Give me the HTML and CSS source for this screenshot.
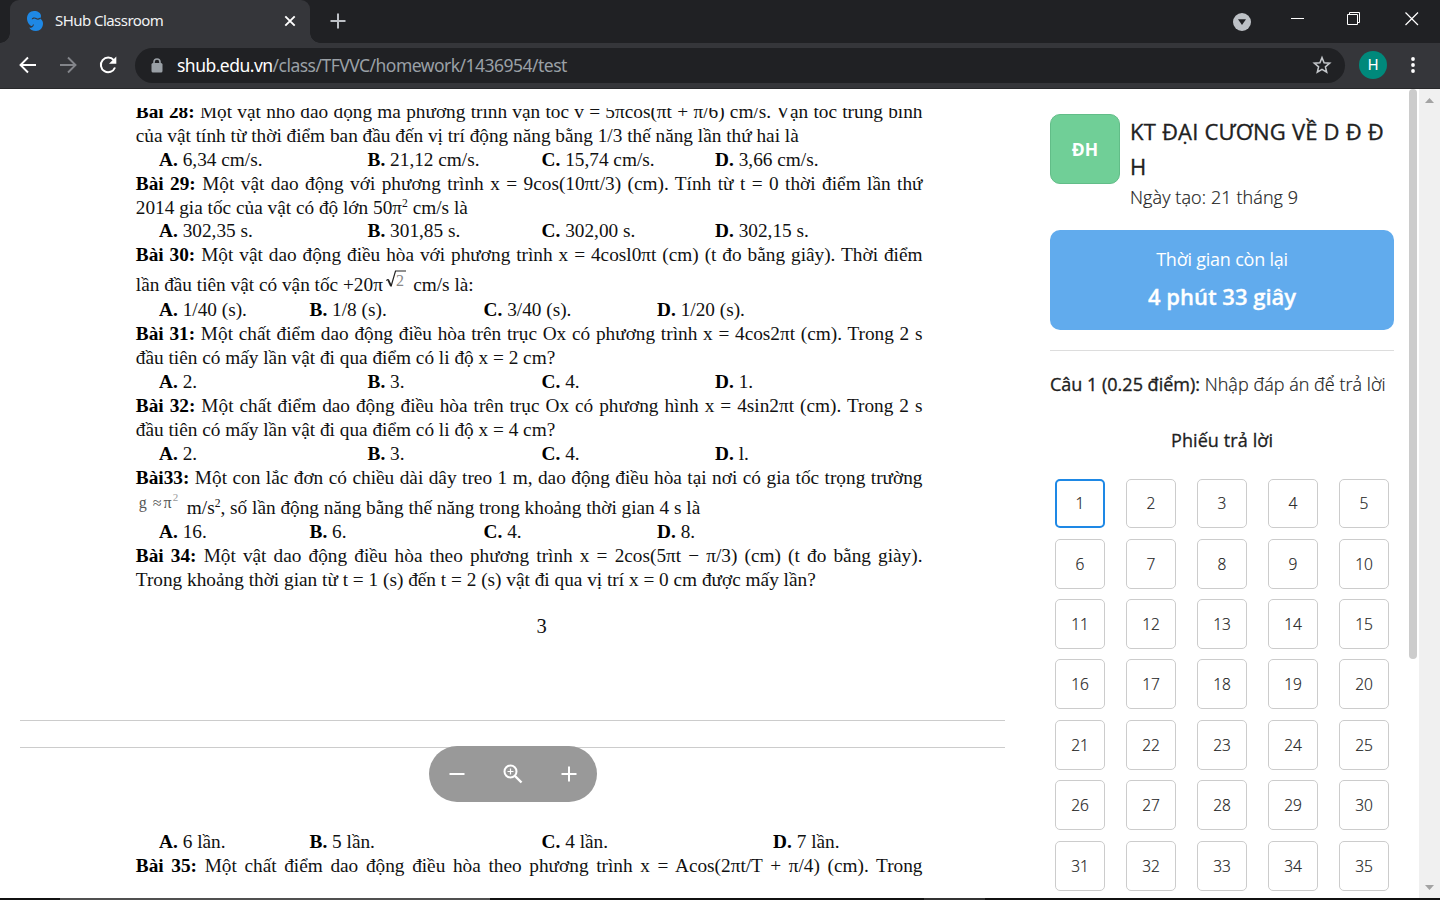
FILE: index.html
```html
<!DOCTYPE html>
<html lang="vi">
<head>
<meta charset="utf-8">
<title>SHub Classroom</title>
<link rel="stylesheet" href="styles.css">
</head>
<body>
<header class="tabs">
  <div class="tab">
    <svg class="logo" width="18" height="22" viewBox="0 0 18 22"><path fill="#1e88e5" d="M8 1c4 0 7 2 7 5 0 1.300-.5 2-1 2.500C16 9.500 17 11.500 17 13.500 17 18 14 21 10 21c-3.500 0-6-1.500-7-4 1.500.7 3 .5 4-.2C3 15.500 1 12 1 8.500 1 4 4 1 8 1z"/><path d="M14 8.300c-1.500 1.200-3 .8-4 .2-1.600-1-3.800-.2-3.800.8M2.500 16.800c2 .8 4.500 0 5-2.300" fill="none" stroke="#35363a" stroke-width="1.100"/></svg>
    <span class="tab-title">SHub Classroom</span>
    <svg class="tab-close" width="12" height="12" viewBox="0 0 12 12"><path d="M1.300 1.300l9.400 9.400M10.700 1.300l-9.400 9.400" stroke="#fff" stroke-width="1.900"/></svg>
  </div>
  <svg class="new-tab" width="16" height="16" viewBox="0 0 16 16"><path d="M8 .5v15M.5 8h15" stroke="#bdc1c6" stroke-width="2"/></svg>
  <div class="window-controls">
    <svg width="18" height="18" viewBox="0 0 18 18"><circle cx="9" cy="9" r="9" fill="#bdc1c6"/><path d="M5 6.300h8L9 12z" fill="#202124"/></svg>
    <svg width="14" height="14" viewBox="0 0 14 14"><path d="M0 6.500h13" stroke="#fff"/></svg>
    <svg width="14" height="14" viewBox="0 0 14 14"><path d="M.5 2.500h10v10H.5zM2.500 2.500v-2h10v10h-2" fill="none" stroke="#fff"/></svg>
    <svg width="14" height="14" viewBox="0 0 14 14"><path d="M.5.5l12.500 12.500M13 .5L.5 13" stroke="#fff" stroke-width="1.200"/></svg>
  </div>
</header>
<nav class="toolbar">
  <svg class="nav-icon" width="18" height="18" viewBox="0 0 18 18"><path d="M17 9H2M9 1.500L1.500 9 9 16.500" fill="none" stroke="#fff" stroke-width="1.900"/></svg>
  <svg class="nav-icon" width="18" height="18" viewBox="0 0 18 18"><path d="M1 9h15M9 1.500L16.500 9 9 16.500" fill="none" stroke="#83858a" stroke-width="1.900"/></svg>
  <svg class="nav-icon" width="20" height="20" viewBox="0 0 20 20"><path d="M15.800 5.200A7.300 7.300 0 1 0 17 12.500" fill="none" stroke="#fff" stroke-width="2"/><path d="M18.300 1.500v7.300H11z" fill="#fff"/></svg>
  <div class="address">
    <svg width="12" height="15" viewBox="0 0 12 15"><rect x=".5" y="5" width="11" height="9.500" rx="1.500" fill="#9aa0a6"/><path d="M3 6V4a3 3 0 0 1 6 0v2" fill="none" stroke="#9aa0a6" stroke-width="1.600"/></svg>
    <span class="url"><b>shub.edu.vn</b>/class/TFVVC/homework/1436954/test</span>
    <svg class="star" width="20" height="20" viewBox="0 0 20 20"><path d="M10 2.600l2.100 5.200 5.600.4-4.300 3.600 1.300 5.400L10 14.300l-4.700 2.900 1.300-5.400-4.300-3.600 5.600-.4z" fill="none" stroke="#c4c7cb" stroke-width="1.500"/></svg>
  </div>
  <span class="profile">H</span>
  <svg class="menu" width="6" height="18" viewBox="0 0 6 18"><g fill="#fff"><circle cx="3" cy="3" r="1.900"/><circle cx="3" cy="9" r="1.900"/><circle cx="3" cy="15" r="1.900"/></g></svg>
</nav>
<main class="content">
  <section class="viewer">
    <article class="page page-one">
      <p class="full"><b>Bài 28:</b> Một vật nhỏ dao động mà phương trình vận tốc v = 5πcos(πt + π/6) cm/s. Vận tốc trung bình</p>
      <p>của vật tính từ thời điểm ban đầu đến vị trí động năng bằng 1/3 thế năng lần thứ hai là</p>
      <div class="opts"><span><b>A.</b> 6,34 cm/s.</span><span><b>B.</b> 21,12 cm/s.</span><span><b>C.</b> 15,74 cm/s.</span><span><b>D.</b> 3,66 cm/s.</span></div>
      <p class="full"><b>Bài 29:</b> Một vật dao động với phương trình x = 9cos(10πt/3) (cm). Tính từ t = 0 thời điểm lần thứ</p>
      <p>2014 gia tốc của vật có độ lớn 50π<sup>2</sup> cm/s là</p>
      <div class="opts"><span><b>A.</b> 302,35 s.</span><span><b>B.</b> 301,85 s.</span><span><b>C.</b> 302,00 s.</span><span><b>D.</b> 302,15 s.</span></div>
      <p class="full"><b>Bài 30:</b> Một vật dao động điều hòa với phương trình x = 4cosl0πt (cm) (t đo bằng giây). Thời điểm</p>
      <p class="tall">lần đầu tiên vật có vận tốc +20π<span class="root"><svg width="20" height="19" viewBox="0 0 20 19"><path d="M0 10.500l2-1.200" fill="none" stroke="#222"/><path d="M2 9.500l3 6.500" fill="none" stroke="#222" stroke-width="1.800"/><path d="M5 16.500L9.500 1H20" fill="none" stroke="#222" stroke-width="1.200"/></svg><i>2</i></span> cm/s là:</p>
      <div class="opts narrow"><span><b>A.</b> 1/40 (s).</span><span><b>B.</b> 1/8 (s).</span><span><b>C.</b> 3/40 (s).</span><span><b>D.</b> 1/20 (s).</span></div>
      <p class="full"><b>Bài 31:</b> Một chất điểm dao động điều hòa trên trục Ox có phương trình x = 4cos2πt (cm). Trong 2 s</p>
      <p>đầu tiên có mấy lần vật đi qua điểm có li độ x = 2 cm?</p>
      <div class="opts"><span><b>A.</b> 2.</span><span><b>B.</b> 3.</span><span><b>C.</b> 4.</span><span><b>D.</b> 1.</span></div>
      <p class="full"><b>Bài 32:</b> Một chất điểm dao động điều hòa trên trục Ox có phương hình x = 4sin2πt (cm). Trong 2 s</p>
      <p>đầu tiên có mấy lần vật đi qua điểm có li độ x = 4 cm?</p>
      <div class="opts"><span><b>A.</b> 2.</span><span><b>B.</b> 3.</span><span><b>C.</b> 4.</span><span><b>D.</b> l.</span></div>
      <p class="full"><b>Bài33:</b> Một con lắc đơn có chiều dài dây treo 1 m, dao động điều hòa tại nơi có gia tốc trọng trường</p>
      <p class="tall"><span class="formula"><span>g</span><span class="approx">≈</span><span>π</span><small>2</small></span>m/s<sup>2</sup>, số lần động năng bằng thế năng trong khoảng thời gian 4 s là</p>
      <div class="opts narrow"><span><b>A.</b> 16.</span><span><b>B.</b> 6.</span><span><b>C.</b> 4.</span><span><b>D.</b> 8.</span></div>
      <p class="full"><b>Bài 34:</b> Một vật dao động điều hòa theo phương trình x = 2cos(5πt − π/3) (cm) (t đo bằng giày).</p>
      <p>Trong khoảng thời gian từ t = 1 (s) đến t = 2 (s) vật đi qua vị trí x = 0 cm được mấy lần?</p>
      <div class="page-number">3</div>
    </article>
    <article class="page page-two">
      <div class="opts wide"><span><b>A.</b> 6 lần.</span><span><b>B.</b> 5 lần.</span><span><b>C.</b> 4 lần.</span><span><b>D.</b> 7 lần.</span></div>
      <p class="full"><b>Bài 35:</b> Một chất điểm dao động điều hòa theo phương trình x = Acos(2πt/T + π/4) (cm). Trong</p>
    </article>
    <div class="zoom-bar">
      <svg width="16" height="16" viewBox="0 0 16 16"><path d="M.5 8h15" stroke="#fff" stroke-width="2"/></svg>
      <svg width="20" height="20" viewBox="0 0 20 20"><circle cx="7.500" cy="7.500" r="6" fill="none" stroke="#fff" stroke-width="2"/><path d="M12 12l6.500 6.500" stroke="#fff" stroke-width="2.400"/><path d="M7.500 4.500v6M4.500 7.500h6" stroke="#fff" stroke-width="1.200"/></svg>
      <svg width="16" height="16" viewBox="0 0 16 16"><path d="M.5 8h15M8 .5v15" stroke="#fff" stroke-width="2"/></svg>
    </div>
  </section>
  <aside class="side">
    <div class="exam">
      <div class="badge">ĐH</div>
      <div><h1>KT ĐẠI CƯƠNG VỀ D Đ Đ H</h1><div class="date">Ngày tạo: 21 tháng 9</div></div>
    </div>
    <div class="timer"><div class="timer-label">Thời gian còn lại</div><div class="timer-value">4 phút 33 giây</div></div>
    <div class="question"><b>Câu 1 (0.25 điểm):</b> <span>Nhập đáp án để trả lời</span></div>
    <h2>Phiếu trả lời</h2>
    <div class="answers">
      <div class="on">1</div><div>2</div><div>3</div><div>4</div><div>5</div>
      <div>6</div><div>7</div><div>8</div><div>9</div><div>10</div>
      <div>11</div><div>12</div><div>13</div><div>14</div><div>15</div>
      <div>16</div><div>17</div><div>18</div><div>19</div><div>20</div>
      <div>21</div><div>22</div><div>23</div><div>24</div><div>25</div>
      <div>26</div><div>27</div><div>28</div><div>29</div><div>30</div>
      <div>31</div><div>32</div><div>33</div><div>34</div><div>35</div>
    </div>
  </aside>
  <div class="side-thumb"></div>
  <div class="scrollbar">
    <svg width="9" height="5" viewBox="0 0 9 5"><path d="M0 5L4.500 0 9 5z" fill="#a3a3a3"/></svg>
    <svg width="9" height="5" viewBox="0 0 9 5"><path d="M0 0l4.500 5L9 0z" fill="#a3a3a3"/></svg>
  </div>
</main>
<footer class="taskbar"><i></i><i></i></footer>
</body>
</html>
```
FILE: styles.css
```css
* { box-sizing: border-box; }
body { margin: 0; width: 1440px; height: 900px; overflow: hidden; display: flex; flex-direction: column; background: #fff; font-family: "Open Sans", sans-serif; }
svg { display: block; flex: none; }

.tabs { height: 43px; background: #202124; display: flex; align-items: flex-start; padding-left: 10px; flex: none; }
.tab { position: relative; width: 300px; height: 43px; background: #35363a; border-radius: 9px 9px 0 0; display: flex; align-items: center; padding: 0 14px 1px 16px; }
.tab::before, .tab::after { content: ""; position: absolute; bottom: 0; width: 10px; height: 10px; }
.tab::before { left: -10px; background: radial-gradient(circle at 0 0, #202124 9.500px, #35363a 10px); }
.tab::after { right: -10px; background: radial-gradient(circle at 100% 0, #202124 9.500px, #35363a 10px); }
.tab-title { margin: -2px 0 0 11px; font-family: "Noto Sans", sans-serif; font-size: 15px; letter-spacing: -0.55px; color: #f1f3f4; white-space: nowrap; }
.tab-close { margin-left: auto; }
.new-tab { margin: 13px 0 0 19.500px; }
.window-controls { margin-left: auto; padding-right: 21px; display: flex; align-items: flex-start; }
.window-controls svg { margin-top: 12px; }
.window-controls svg:first-child { margin-top: 13px; margin-right: 40px; }
.window-controls svg:nth-child(2) { margin-right: 42px; }
.window-controls svg:nth-child(3) { margin-right: 44px; }

.toolbar { height: 46px; background: #35363a; border-bottom: 1px solid #28292b; display: flex; align-items: center; padding: 0 0 1px 18.500px; flex: none; }
.nav-icon { margin-right: 22px; }
.nav-icon + .nav-icon + .nav-icon { margin: 0 17.500px 0 -1px; }
.address { width: 1210px; height: 35px; border-radius: 18px; background: #202124; display: flex; align-items: center; padding: 0 13px 0 16px; }
.url { margin-left: 14px; font-family: "Noto Sans", sans-serif; font-size: 17.500px; letter-spacing: -0.520px; color: #9aa0a6; white-space: nowrap; }
.url b { font-weight: 400; color: #fff; }
.star { margin-left: auto; }
.profile { width: 28px; height: 28px; margin-left: 14px; border-radius: 50%; background: #00897b; color: #fff; font: 15px/28px Roboto, sans-serif; text-align: center; }
.menu { margin-left: 22.500px; }

.content { height: 809px; flex: none; display: flex; align-items: flex-start; }
.viewer { position: relative; width: 985px; height: 790px; margin: 19px 0 0 20px; overflow: hidden; flex: none; }
.page { display: flow-root; padding: 0 82.500px 0 115.800px; font: 19.300px/23.930px "Liberation Serif", serif; color: #111; border-bottom: 1px solid #ccc; }
.page-one { height: 613px; }
.page-one > :first-child { margin-top: -8.200px; }
.page-two { height: 500px; margin-top: 26px; padding-top: 82px; border-top: 1px solid #ccc; }
.page p { margin: 0; height: 23.930px; white-space: nowrap; }
.page p.full { text-align: justify; text-align-last: justify; white-space: normal; }
.page p.tall { height: 30.900px; line-height: 36.500px; }
.page b { color: #000; }
.page sup { font-size: 11.600px; line-height: 0; vertical-align: 7.200px; }
.opts { height: 23.930px; padding-left: 23.300px; display: grid; grid-template-columns: 208.500px 174px 173.500px 1fr; white-space: nowrap; }
.opts.narrow { grid-template-columns: 150.500px 174px 173.500px 1fr; }
.opts.wide { grid-template-columns: 150.500px 232px 231.500px 1fr; }
.page-number { margin-top: 21.500px; padding-left: 25px; text-align: center; font-size: 20.500px; line-height: 24px; }
.root { display: inline-block; position: relative; width: 22.500px; height: 19px; line-height: 19px; vertical-align: 2px; margin-left: 3px; }
.root i { position: absolute; left: 10px; top: 1px; font-style: normal; font-size: 16px; color: #888; }
.formula { position: relative; top: -6px; display: inline-flex; width: 51px; padding-left: 3px; height: 20px; line-height: 20px; font-size: 16px; color: #555; }
.formula .approx { margin: 0 2px 0 6px; font-size: 16px; }
.formula small { margin-left: 1px; font-size: 11px; line-height: 8px; color: #999; }
.zoom-bar { position: absolute; left: 408.500px; top: 638px; width: 168px; height: 56px; border-radius: 28px; background: #999; display: flex; align-items: center; justify-content: space-between; padding: 0 20px; }

.side { width: 344px; margin: 25px 0 0 45px; color: #212121; flex: none; }
.exam { display: flex; gap: 10px; height: 116px; }
.badge { width: 70px; height: 70px; border: 1px solid #62bd88; border-radius: 10px; background: #70cf97; color: #fff; font-weight: 700; font-size: 17.500px; line-height: 69px; text-align: center; flex: none; }
h1 { margin: 0; font-size: 22px; font-weight: 500; line-height: 35px; letter-spacing: .2px; -webkit-text-stroke: .35px #212121; }
.date { font-size: 18px; font-weight: 300; line-height: 27px; letter-spacing: .1px; -webkit-text-stroke: .2px #212121; }
.timer { height: 100px; border-radius: 10px; background: #61abed; color: #fff; text-align: center; padding-top: 14px; }
.timer-label { font-size: 18px; line-height: 30px; letter-spacing: -.22px; }
.timer-value { font-size: 22px; font-weight: 600; line-height: 45px; -webkit-text-stroke: .3px #fff; }
.question { margin-top: 20px; padding-top: 20px; border-top: 1px solid #ddd; font-size: 18px; line-height: 27px; font-weight: 300; white-space: nowrap; }
.question b { font-weight: 500; -webkit-text-stroke: .35px #212121; }
.question span { letter-spacing: .03px; -webkit-text-stroke: .2px #212121; }
h2 { margin: 28px 0 0; font-size: 18px; font-weight: 500; line-height: 28px; text-align: center; letter-spacing: .1px; -webkit-text-stroke: .3px #212121; }
.answers { margin-top: 24.500px; padding: 0 5px; display: grid; grid-template-columns: repeat(5, 50px); justify-content: space-between; grid-template-rows: 49.900px; grid-auto-rows: 50px; row-gap: 10.370px; }
.answers div { border: 1px solid #ccc; border-radius: 5px; text-align: center; line-height: 48.500px; font-size: 15.500px; font-weight: 300; -webkit-text-stroke: .2px #212121; }
.answers div:nth-child(-n+5) { height: 49px; line-height: 47.500px; }
.answers .on:first-child { border: 2px solid #1e88e5; line-height: 45.500px; }
.side-thumb { width: 8px; height: 570px; margin-left: 15px; border-radius: 4px; background: #ccc; flex: none; }
.scrollbar { width: 21px; height: 809px; margin-left: 2px; padding: 9px 6px 8px; background: #f0f0f0; display: flex; flex-direction: column; justify-content: space-between; }
.taskbar { height: 2px; background: #111; display: flex; padding-left: 60px; gap: 434px; flex: none; }
.taskbar i { width: 430px; background: #505050; }
.taskbar i + i { width: 61px; background: #333; }
```
